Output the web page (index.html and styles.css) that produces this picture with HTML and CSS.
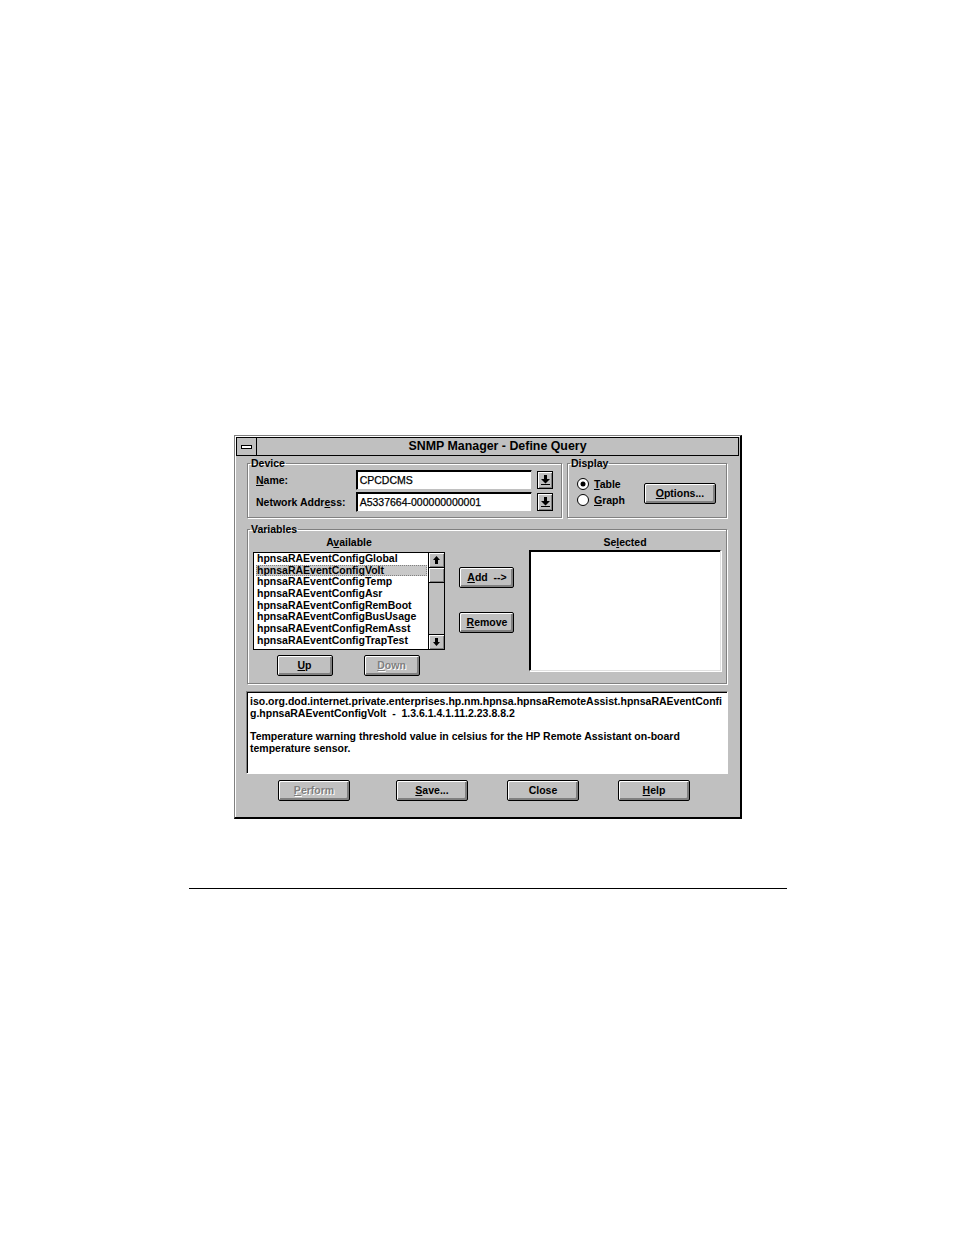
FILE: index.html
```html
<!doctype html>
<html lang="en">
<head>
    <meta charset="UTF-8">
    <title>SNMP Manager - Define Query</title>
    <link rel="stylesheet" href="styles.css">
</head>
<body>
<div class="page">
    <div class="dialog">
        <div class="titlebar">
            <div class="sysmenu"><span class="sysdash"></span></div>
            <div class="title">SNMP Manager - Define Query</div>
        </div>
        <div class="dlg-body">
            <div class="row-top">
                <fieldset class="group device">
                    <legend>Device</legend>
                    <div class="field-row">
                        <label class="lbl"><u>N</u>ame:</label>
                        <div class="textbox">CPCDCMS</div>
                        <button class="drop">
                            <svg width="9" height="10" viewBox="0 0 9 10"><path d="M3 0h3v4h3l-4.5 4.5L0 4h3z" fill="#000"/><rect x="0" y="9" width="9" height="1" fill="#000"/></svg>
                        </button>
                    </div>
                    <div class="field-row">
                        <label class="lbl">Network Addr<u>e</u>ss:</label>
                        <div class="textbox">A5337664-000000000001</div>
                        <button class="drop">
                            <svg width="9" height="10" viewBox="0 0 9 10"><path d="M3 0h3v4h3l-4.5 4.5L0 4h3z" fill="#000"/><rect x="0" y="9" width="9" height="1" fill="#000"/></svg>
                        </button>
                    </div>
                </fieldset>
                <fieldset class="group display">
                    <legend>Display</legend>
                    <div class="radios">
                        <div class="radio-row">
                            <svg class="radio" width="12" height="12" viewBox="0 0 12 12"><circle cx="6" cy="6" r="5.5" fill="#fff" stroke="#000"/><circle cx="6" cy="6" r="2.5" fill="#000"/></svg>
                            <span><u>T</u>able</span>
                        </div>
                        <div class="radio-row">
                            <svg class="radio" width="12" height="12" viewBox="0 0 12 12"><circle cx="6" cy="6" r="5.5" fill="#fff" stroke="#000"/></svg>
                            <span><u>G</u>raph</span>
                        </div>
                    </div>
                    <button class="btn options"><u>O</u>ptions...</button>
                </fieldset>
            </div>

            <fieldset class="group variables">
                <legend>Variables</legend>
                <div class="col-avail">
                    <div class="col-label">A<u>v</u>ailable</div>
                    <div class="listbox">
                        <ul class="items">
                            <li>hpnsaRAEventConfigGlobal</li>
                            <li class="current">hpnsaRAEventConfigVolt</li>
                            <li>hpnsaRAEventConfigTemp</li>
                            <li>hpnsaRAEventConfigAsr</li>
                            <li>hpnsaRAEventConfigRemBoot</li>
                            <li>hpnsaRAEventConfigBusUsage</li>
                            <li>hpnsaRAEventConfigRemAsst</li>
                            <li>hpnsaRAEventConfigTrapTest</li>
                        </ul>
                        <div class="vscroll">
                            <div class="sb-btn">
                                <svg width="7" height="8" viewBox="0 0 7 8"><path d="M3.5 0L7 4H5v4H2V4H0z" fill="#000"/></svg>
                            </div>
                            <div class="sb-thumb"></div>
                            <div class="sb-track"></div>
                            <div class="sb-btn">
                                <svg width="7" height="8" viewBox="0 0 7 8"><path d="M2 0h3v4h2L3.5 8 0 4h2z" fill="#000"/></svg>
                            </div>
                        </div>
                    </div>
                    <div class="updown">
                        <button class="btn small"><u>U</u>p</button>
                        <button class="btn small disabled"><u>D</u>own</button>
                    </div>
                </div>
                <div class="col-mid">
                    <button class="btn mid"><u>A</u>dd&nbsp;&nbsp;--&gt;</button>
                    <button class="btn mid"><u>R</u>emove</button>
                </div>
                <div class="col-sel">
                    <div class="col-label">Se<u>l</u>ected</div>
                    <div class="selbox"></div>
                </div>
            </fieldset>

            <div class="desc">
                <p>iso.org.dod.internet.private.enterprises.hp.nm.hpnsa.hpnsaRemoteAssist.hpnsaRAEventConfi<br>g.hpnsaRAEventConfigVolt&nbsp; -&nbsp; 1.3.6.1.4.1.11.2.23.8.8.2</p>
                <p>Temperature warning threshold value in celsius for the HP Remote Assistant on-board temperature sensor.</p>
            </div>

            <div class="actions">
                <button class="btn wide disabled first"><u>P</u>erform</button>
                <button class="btn wide"><u>S</u>ave...</button>
                <button class="btn wide">Close</button>
                <button class="btn wide"><u>H</u>elp</button>
            </div>
        </div>
    </div>
    <div class="rule"></div>
</div>
</body>
</html>
```

FILE: styles.css
```css
*{
    margin: 0;
    padding: 0;
    box-sizing: border-box;
}

body{
    background-color: #fff;
    font-family: "Liberation Sans", Arial, sans-serif;
    font-size: 10.5px;
    font-weight: bold;
    color: #000;
}

.page{
    padding-top: 435px;
}

.dialog{
    width: 508px;
    margin-left: 234px;
    background-color: #c0c0c0;
    border-top: 1px solid #808080;
    border-left: 1px solid #808080;
    border-right: 2px solid #000;
    border-bottom: 2px solid #000;
    box-shadow: inset 1px 1px #fff;
}

/* title bar */
.titlebar{
    display: flex;
    height: 19px;
    margin: 1px 1px 0 1px;
    border: 1px solid #000;
}
.sysmenu{
    width: 20px;
    border-right: 1px solid #000;
    display: flex;
    align-items: center;
    justify-content: center;
}
.sysdash{
    display: block;
    width: 11px;
    height: 4px;
    background: #fff;
    border: 1px solid #000;
}
.title{
    flex: 1;
    text-align: center;
    font-size: 12.4px;
    line-height: 17px;
}

.dlg-body{
    padding: 0 13px 16px 12px;
}

/* group boxes */
.group{
    border: 1px solid #808080;
    box-shadow: 1px 1px #fff, inset 1px 1px #fff;
    min-width: 0;
}
.group legend{
    font-size: 10.5px;
    line-height: 13px;
    padding: 0 1px;
}

.row-top{
    display: flex;
    gap: 5px;
    margin-top: 1px;
}
.device{
    width: 315px;
    padding: 0 8px 5px 8px;
}
.device legend{
    margin-left: -6px;
}
.field-row{
    display: flex;
    align-items: center;
    height: 20px;
}
.field-row + .field-row{
    margin-top: 2px;
}
.lbl{
    width: 100px;
}
.lbl u, .btn u, .radio-row u, .col-label u{
    text-decoration-thickness: 1px;
    text-underline-offset: 1px;
}
.textbox{
    width: 177px;
    height: 20px;
    background: #fff;
    border: 1px solid #000;
    border-right-color: #c0c0c0;
    border-bottom-color: #c0c0c0;
    box-shadow: inset 1px 1px #000;
    padding: 2px 0 0 3px;
    font-weight: normal;
    -webkit-text-stroke: 0.25px #000;
    line-height: 15px;
}
.drop{
    width: 16px;
    height: 18px;
    margin-left: 5px;
    background: #c0c0c0;
    border: 1px solid #000;
    box-shadow: inset 1px 1px #fff, inset -1px -1px #808080;
    display: flex;
    align-items: center;
    justify-content: center;
}

.display{
    flex: 1;
    display: flex;
    align-items: center;
    padding: 0 10px 4px 9px;
}
.display legend{
    margin-left: -7px;
}
.radios{
    flex: 1;
}
.radio-row{
    display: flex;
    align-items: center;
    gap: 5px;
    height: 16px;
}

/* buttons */
.btn{
    font-family: "Liberation Sans", Arial, sans-serif;
    font-size: 10.5px;
    font-weight: bold;
    color: #000;
    background: #c0c0c0;
    border: 1px solid #000;
    border-radius: 2px;
    box-shadow: inset 1px 1px #fff, inset -1px -1px #808080, inset -2px -2px #808080;
    height: 21px;
    line-height: 17px;
    text-align: center;
}
.btn.disabled{
    color: #808080;
    text-shadow: 1px 1px 0 #fff;
}
.options{
    width: 72px;
    margin-top: 3px;
}

/* variables */
.variables{
    margin-top: 5px;
    display: flex;
    padding: 0 5px 7px 5px;
}
.variables legend{
    margin-left: -3px;
}
.col-label{
    text-align: center;
    line-height: 12px;
    margin-bottom: 3px;
}
.col-avail{
    width: 193px;
}
.col-avail .col-label{
    margin-bottom: 4px;
}
.listbox{
    display: flex;
    height: 98px;
    background: #fff;
    border: 1px solid #000;
}
.items{
    flex: 1;
    list-style: none;
    padding: 0 0 0 2px;
}
.items li{
    line-height: 11.7px;
    height: 11.7px;
    padding-left: 1px;
    white-space: nowrap;
}
.items li.current{
    background: #c8c8c8;
    outline: 1px dotted #808080;
    outline-offset: -1px;
    margin-right: 1px;
}
.vscroll{
    width: 16px;
    border-left: 1px solid #000;
    display: flex;
    flex-direction: column;
    background: #c0c0c0;
}
.sb-btn{
    height: 14px;
    display: flex;
    align-items: center;
    justify-content: center;
    box-shadow: inset 1px 1px #fff, inset -1px -1px #808080;
}
.sb-thumb{
    height: 16px;
    border-top: 1px solid #000;
    border-bottom: 1px solid #000;
    box-shadow: inset 1px 1px #fff, inset -1px -1px #808080;
}
.sb-track{
    flex: 1;
    border-bottom: 1px solid #000;
}
.updown{
    display: flex;
    justify-content: center;
    gap: 31px;
    margin-top: 5px;
    padding-right: 2px;
}
.small{
    width: 56px;
}
.col-mid{
    width: 55px;
    margin: 0 14px;
    padding-top: 31px;
    display: flex;
    flex-direction: column;
    gap: 24px;
}
.mid{
    width: 55px;
    padding-left: 1px;
}
.col-sel{
    width: 193px;
    margin-left: 1px;
}
.col-sel .col-label{
    margin-bottom: 2px;
}
.selbox{
    height: 121px;
    background: #fff;
    border: 1px solid #000;
    border-right-color: #e0e0e0;
    border-bottom-color: #e0e0e0;
    box-shadow: inset 1px 1px #000, 1px 1px #fff;
}

/* description */
.desc{
    margin: 7px -1px 0 -1px;
    height: 83px;
    background: #fff;
    border: 1px solid #808080;
    border-right-color: #fff;
    border-bottom-color: #fff;
    box-shadow: inset 1px 1px #000;
    padding: 4px 2px 0 3px;
    line-height: 11.7px;
    white-space: nowrap;
}
.desc p + p{
    margin-top: 11.7px;
    white-space: normal;
}

.actions{
    display: flex;
    gap: 39px;
    margin-top: 6px;
    padding-left: 31px;
}
.wide{
    width: 72px;
}
.actions .first{
    margin-right: 7px;
}

.rule{
    height: 1px;
    background: #000;
    width: 598px;
    margin: 69px 0 0 189px;
}
```
